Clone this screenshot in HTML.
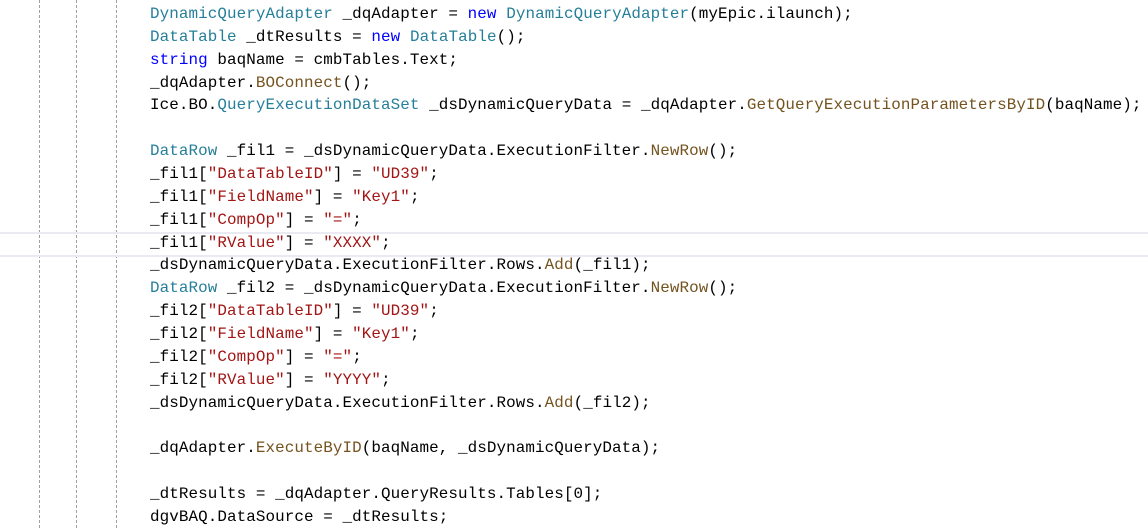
<!DOCTYPE html>
<html><head><style>
html,body{margin:0;padding:0;background:#fff;width:1148px;height:528px;overflow:hidden;position:relative}
.g{position:absolute;top:0;height:528px;width:0;border-left:1px dashed #a0a0a0}
.cur{position:absolute;left:0;right:0;top:232px;height:21px;border-top:2px solid #eaeaf2;border-bottom:2px solid #eaeaf2}
pre{position:absolute;left:150px;top:3px;margin:0;font-family:"Liberation Mono",monospace;font-size:15.9px;letter-spacing:0.09px;line-height:22.86px;color:#000}
.t{color:#267f99}.k{color:#0000ff}.m{color:#74531f}.s{color:#a31515}
</style></head><body>
<div class="g" style="left:39px"></div>
<div class="g" style="left:76px"></div>
<div class="g" style="left:116px"></div>
<div class="cur"></div>
<pre><span class="t">DynamicQueryAdapter</span> _dqAdapter = <span class="k">new</span> <span class="t">DynamicQueryAdapter</span>(myEpic.ilaunch);
<span class="t">DataTable</span> _dtResults = <span class="k">new</span> <span class="t">DataTable</span>();
<span class="k">string</span> baqName = cmbTables.Text;
_dqAdapter.<span class="m">BOConnect</span>();
Ice.BO.<span class="t">QueryExecutionDataSet</span> _dsDynamicQueryData = _dqAdapter.<span class="m">GetQueryExecutionParametersByID</span>(baqName);

<span class="t">DataRow</span> _fil1 = _dsDynamicQueryData.ExecutionFilter.<span class="m">NewRow</span>();
_fil1[<span class="s">"DataTableID"</span>] = <span class="s">"UD39"</span>;
_fil1[<span class="s">"FieldName"</span>] = <span class="s">"Key1"</span>;
_fil1[<span class="s">"CompOp"</span>] = <span class="s">"="</span>;
_fil1[<span class="s">"RValue"</span>] = <span class="s">"XXXX"</span>;
_dsDynamicQueryData.ExecutionFilter.Rows.<span class="m">Add</span>(_fil1);
<span class="t">DataRow</span> _fil2 = _dsDynamicQueryData.ExecutionFilter.<span class="m">NewRow</span>();
_fil2[<span class="s">"DataTableID"</span>] = <span class="s">"UD39"</span>;
_fil2[<span class="s">"FieldName"</span>] = <span class="s">"Key1"</span>;
_fil2[<span class="s">"CompOp"</span>] = <span class="s">"="</span>;
_fil2[<span class="s">"RValue"</span>] = <span class="s">"YYYY"</span>;
_dsDynamicQueryData.ExecutionFilter.Rows.<span class="m">Add</span>(_fil2);

_dqAdapter.<span class="m">ExecuteByID</span>(baqName, _dsDynamicQueryData);

_dtResults = _dqAdapter.QueryResults.Tables[0];
dgvBAQ.DataSource = _dtResults;</pre>
</body></html>
